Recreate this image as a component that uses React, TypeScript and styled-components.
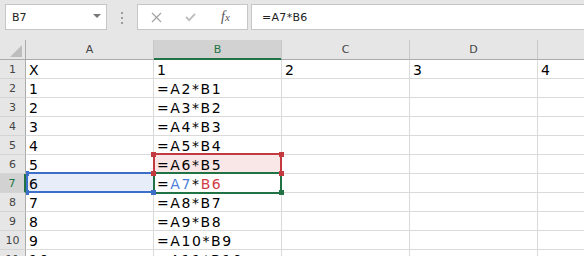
import React from 'react';
import styled, { createGlobalStyle } from 'styled-components';

const GREEN = '#217346';
const BLUE = '#3b6fc8';
const RED = '#c33a40';

const GlobalStyle = createGlobalStyle`
  html, body {
    margin: 0;
    padding: 0;
    overflow: hidden;
    background: #e6e6e6;
  }
  body {
    font-family: "DejaVu Sans", "Liberation Sans", sans-serif;
  }
`;

const Window = styled.div`
  width: 584px;
  height: 256px;
  overflow: hidden;
  background: #e6e6e6;
`;

const Toolbar = styled.div`
  display: flex;
  align-items: flex-start;
  height: 40px;
  padding: 4px 0 0 5px;
  box-sizing: border-box;
`;

const NameBox = styled.div`
  display: flex;
  align-items: center;
  justify-content: space-between;
  width: 102px;
  height: 26px;
  box-sizing: border-box;
  padding: 0 5px 0 6px;
  background: #fff;
  border: 1px solid #c6c6c6;
  font-size: 11px;
  color: #222;
`;

const Caret = styled.span`
  width: 0;
  height: 0;
  margin-top: -2px;
  border-left: 4px solid transparent;
  border-right: 4px solid transparent;
  border-top: 4px solid #777;
`;

const Grip = styled.div`
  display: flex;
  flex-direction: column;
  gap: 3px;
  margin: 8px 14px 0 14px;

  span {
    width: 2px;
    height: 2px;
    background: #9c9c9c;
  }
`;

const FxButtons = styled.div`
  display: flex;
  width: 111px;
  height: 26px;
  box-sizing: border-box;
  padding-left: 1px;
  background: #fff;
  border: 1px solid #c6c6c6;
`;

const FxButton = styled.div<{ $w: number }>`
  display: flex;
  align-items: center;
  justify-content: center;
  width: ${(p) => p.$w}px;
`;

const FxLabel = styled.span`
  font-family: "Liberation Serif", serif;
  font-style: italic;
  font-size: 14px;
  color: #555;

  small {
    font-size: 11px;
  }
`;

const FormulaBar = styled.div`
  display: flex;
  align-items: center;
  flex: 1;
  height: 26px;
  box-sizing: border-box;
  margin-left: 3px;
  padding-left: 10px;
  background: #fff;
  border: 1px solid #c6c6c6;
  border-right: none;
  font-size: 11px;
  letter-spacing: 0.3px;
  color: #222;
`;

const Sheet = styled.div`
  position: relative;
  display: grid;
  grid-template-columns: 26px repeat(5, 128px);
  grid-template-rows: 20px;
  grid-auto-rows: 19px;
`;

const Corner = styled.div`
  display: flex;
  align-items: flex-end;
  justify-content: flex-end;
  padding: 0 3px 2px 0;
  box-sizing: border-box;
  background: #e6e6e6;
  border-right: 1px solid #ababab;
  border-bottom: 1px solid #ababab;
`;

const ColHeader = styled.div<{ $active?: boolean }>`
  box-sizing: border-box;
  text-align: center;
  font-size: 11px;
  line-height: 19px;
  color: ${(p) => (p.$active ? GREEN : '#444')};
  background: ${(p) => (p.$active ? '#d2d2d2' : '#e6e6e6')};
  border-right: 1px solid #c8c8c8;
  border-bottom: 1px solid ${(p) => (p.$active ? GREEN : '#ababab')};
  box-shadow: ${(p) => (p.$active ? `inset 0 -1px 0 ${GREEN}` : 'none')};
`;

const RowHeader = styled.div<{ $active?: boolean }>`
  box-sizing: border-box;
  text-align: center;
  font-size: 11px;
  line-height: 19px;
  color: ${(p) => (p.$active ? GREEN : '#444')};
  background: ${(p) => (p.$active ? '#d2d2d2' : '#e6e6e6')};
  border-right: ${(p) => (p.$active ? `2px solid ${GREEN}` : '1px solid #ababab')};
  border-bottom: 1px solid #d4d4d4;
`;

const Cell = styled.div<{ $fill?: string }>`
  box-sizing: border-box;
  padding-left: 3px;
  font-size: 14px;
  line-height: 20px;
  letter-spacing: 1.6px;
  white-space: nowrap;
  color: #000;
  background: ${(p) => p.$fill || '#fff'};
  border-right: 1px solid #dadada;
  border-bottom: 1px solid #dadada;
`;

const Ref = styled.span<{ $color: string }>`
  color: ${(p) => p.$color};
`;

const Frame = styled.div<{
  $color: string;
  $x: number;
  $y: number;
  $w: number;
  $h: number;
  $z: number;
  $open?: 'right' | 'bottom';
}>`
  position: absolute;
  left: ${(p) => p.$x}px;
  top: ${(p) => p.$y}px;
  width: ${(p) => p.$w}px;
  height: ${(p) => p.$h}px;
  box-sizing: border-box;
  border: 2px solid ${(p) => p.$color};
  ${(p) => (p.$open ? `border-${p.$open}: none;` : '')}
  z-index: ${(p) => p.$z};
  pointer-events: none;
`;

const Handle = styled.div<{ $color: string; $x: number; $y: number; $z: number; $w?: number }>`
  position: absolute;
  left: ${(p) => p.$x}px;
  top: ${(p) => p.$y}px;
  width: ${(p) => p.$w ?? 5}px;
  height: 5px;
  background: ${(p) => p.$color};
  z-index: ${(p) => p.$z};
`;

const rows = Array.from({ length: 11 }, (_, i) => i + 1);
const firstRow: Record<string, string> = { C: '2', D: '3', E: '4' };

const formulaFor = (r: number) => {
  if (r === 1) return '1';
  if (r === 7)
    return (
      <>
        =<Ref $color="#4a7fd8">A7</Ref>*<Ref $color="#d23c48">B6</Ref>
      </>
    );
  return `=A${r}*B${r - 1}`;
};

const App: React.FC = () => {
  return (
    <Window>
      <GlobalStyle />
      <Toolbar>
        <NameBox>
          B7
          <Caret />
        </NameBox>
        <Grip>
          <span />
          <span />
          <span />
        </Grip>
        <FxButtons>
          <FxButton $w={34}>
            <svg width="11" height="11" viewBox="0 0 11 11">
              <path d="M1 1 L10 10 M10 1 L1 10" stroke="#a3a3a3" strokeWidth="1.2" fill="none" />
            </svg>
          </FxButton>
          <FxButton $w={34}>
            <svg width="11" height="10" viewBox="0 0 11 10">
              <path d="M1 5 L4.2 8.2 L10 1.8" stroke="#bdbdbd" strokeWidth="1.8" fill="none" />
            </svg>
          </FxButton>
          <FxButton $w={37}>
            <FxLabel>
              f<small>x</small>
            </FxLabel>
          </FxButton>
        </FxButtons>
        <FormulaBar>=A7*B6</FormulaBar>
      </Toolbar>

      <Sheet>
        <Corner>
          <svg width="12" height="12" viewBox="0 0 12 12">
            <polygon points="12,0 12,12 0,12" fill="#bdbdbd" />
          </svg>
        </Corner>
        {['A', 'B', 'C', 'D', 'E'].map((c) => (
          <ColHeader key={c} $active={c === 'B'}>
            {c}
          </ColHeader>
        ))}

        {rows.map((r) => (
          <React.Fragment key={r}>
            <RowHeader $active={r === 7}>{r}</RowHeader>
            <Cell $fill={r === 7 ? '#e8eef9' : undefined}>{r === 1 ? 'X' : r - 1}</Cell>
            <Cell $fill={r === 6 ? '#f9e7e7' : undefined}>{formulaFor(r)}</Cell>
            {['C', 'D', 'E'].map((c) => (
              <Cell key={c}>{r === 1 ? firstRow[c] : ''}</Cell>
            ))}
          </React.Fragment>
        ))}

        {/* active cell B7 */}
        <Frame $color={GREEN} $x={153} $y={132} $w={129} $h={22} $z={1} />
        <Handle $color={GREEN} $x={279} $y={150} $z={1} />

        {/* A7 reference */}
        <Frame $color={BLUE} $x={26} $y={132} $w={128} $h={21} $z={2} $open="right" />
        <Handle $color={BLUE} $x={26} $y={131} $w={3} $z={2} />
        <Handle $color={BLUE} $x={26} $y={150} $w={3} $z={2} />
        <Handle $color={BLUE} $x={151} $y={150} $z={2} />

        {/* B6 reference */}
        <Frame $color={RED} $x={153} $y={113} $w={129} $h={20} $z={3} $open="bottom" />
        <Handle $color={RED} $x={151} $y={112} $z={3} />
        <Handle $color={RED} $x={279} $y={112} $z={3} />
        <Handle $color={RED} $x={151} $y={131} $z={3} />
        <Handle $color={RED} $x={279} $y={131} $z={3} />
      </Sheet>
    </Window>
  );
};

export default App;
